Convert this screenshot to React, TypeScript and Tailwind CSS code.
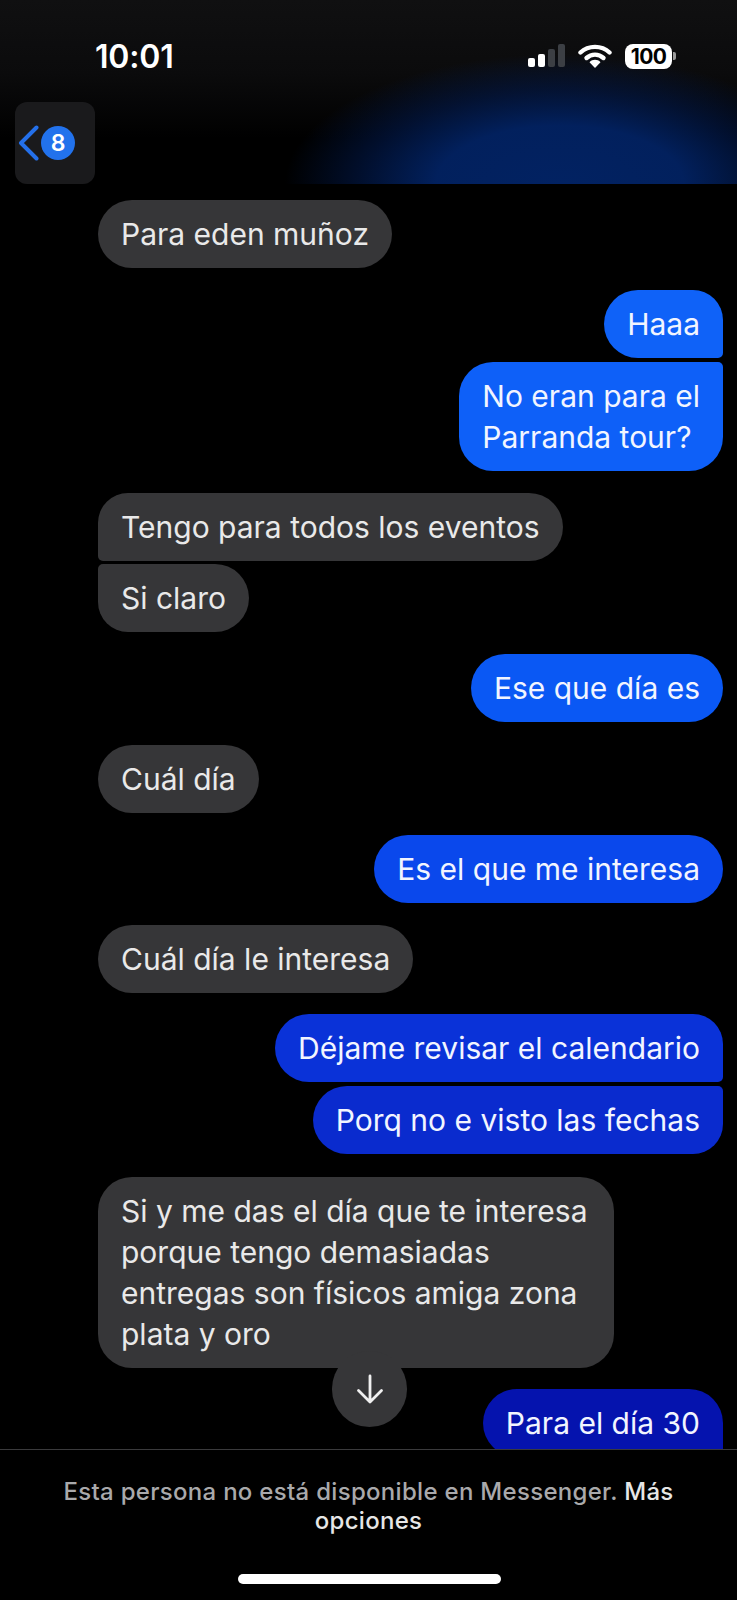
import React from "react";

type Msg = { t: string; me?: boolean; mt: string; cls: string };

const msgs: Msg[] = [
  { t: "Para eden muñoz", mt: "mt-[16px]", cls: "pr-[23px] rounded-[34px] bg-[#363638]" },
  { t: "Haaa", me: true, mt: "mt-[22px]", cls: "pr-[23px] rounded-l-[34px] rounded-tr-[30px] rounded-br-[5px] bg-[#0f62f8]" },
  { t: "No eran para el\nParranda tour?", me: true, mt: "mt-[4px]", cls: "pr-[23px] rounded-l-[34px] rounded-tr-[5px] rounded-br-[34px] bg-[#0e60f8]" },
  { t: "Tengo para todos los eventos", mt: "mt-[22px]", cls: "pr-[23px] rounded-r-[34px] rounded-tl-[30px] rounded-bl-[5px] bg-[#363638]" },
  { t: "Si claro", mt: "mt-[3px]", cls: "pr-[23px] rounded-r-[34px] rounded-tl-[5px] rounded-bl-[30px] bg-[#363638]" },
  { t: "Ese que día es", me: true, mt: "mt-[22px]", cls: "pr-[23px] rounded-[34px] bg-[#0a58f4]" },
  { t: "Cuál día", mt: "mt-[23px]", cls: "pr-[23px] rounded-[34px] bg-[#363638]" },
  { t: "Es el que me interesa", me: true, mt: "mt-[22px]", cls: "pr-[23px] rounded-[34px] bg-[#0a48ec]" },
  { t: "Cuál día le interesa", mt: "mt-[22px]", cls: "pr-[23px] rounded-[34px] bg-[#363638]" },
  { t: "Déjame revisar el calendario", me: true, mt: "mt-[21px]", cls: "pr-[23px] rounded-l-[34px] rounded-tr-[30px] rounded-br-[5px] bg-[#0a32d8]" },
  { t: "Porq no e visto las fechas", me: true, mt: "mt-[4px]", cls: "pr-[23px] rounded-l-[34px] rounded-tr-[5px] rounded-br-[30px] bg-[#0a2bce]" },
  { t: "Si y me das el día que te interesa\nporque tengo demasiadas\nentregas son físicos amiga zona\nplata y oro", mt: "mt-[23px]", cls: "pr-[26px] rounded-[34px] bg-[#363638]" },
  { t: "Para el día 30", me: true, mt: "mt-[21px]", cls: "pr-[23px] rounded-l-[34px] rounded-tr-[34px] rounded-br-[5px] bg-[#0513ae]" },
];

function Bubble({ m }: { m: Msg }) {
  return (
    <div className={`flex ${m.me ? "justify-end" : "justify-start"} ${m.mt}`}>
      <div
        className={`${m.cls} pl-[23px] py-[13.5px] whitespace-pre text-[30px] leading-[41px] ${
          m.me ? "text-[#f2f5ff]" : "text-[#e9e9e9]"
        }`}
      >
        {m.t}
      </div>
    </div>
  );
}

export default function App() {
  return (
    <div className="relative w-[737px] h-[1600px] overflow-hidden bg-black flex flex-col font-['Inter','Liberation_Sans',sans-serif]">
      {/* header */}
      <header className="relative h-[184px] shrink-0 bg-[linear-gradient(180deg,#101011_0%,#0b0b0c_40%,#000000_75%)] overflow-hidden">
        <div className="absolute inset-0 bg-[radial-gradient(ellipse_275px_130px_at_560px_100%,rgba(2,34,98,1)_0%,rgba(2,34,98,0.95)_45%,rgba(2,26,78,0.6)_72%,rgba(0,10,30,0)_100%)]" />
        <div className="relative flex items-center h-[112px] pl-[95px] pr-[61px]">
          <span className="mt-[2px] text-white text-[32px] font-semibold tracking-[-0.2px] leading-none">10:01</span>
          <div className="ml-auto flex items-center">
            <svg width="38" height="24" viewBox="0 0 38 24">
              <rect x="0" y="14" width="7" height="9" rx="2" fill="#fff" />
              <rect x="10" y="10" width="7" height="13" rx="2" fill="#fff" />
              <rect x="20" y="5" width="7" height="18" rx="2" fill="#3c3f44" />
              <rect x="30" y="0" width="7" height="23" rx="2" fill="#3c3f44" />
            </svg>
            <svg className="ml-[12px]" width="34" height="24" viewBox="0 0 34 24">
              <path d="M2.5 8.5C10.5 1 23.5 1 31.5 8.5" stroke="#fff" strokeWidth="4.4" fill="none" strokeLinecap="round" />
              <path d="M8.5 14C13.5 9.5 20.5 9.5 25.5 14" stroke="#fff" strokeWidth="4.4" fill="none" strokeLinecap="round" />
              <path d="M11.5 18.2C14.5 15 19.5 15 22.5 18.2L17 24Z" fill="#fff" />
            </svg>
            <div className="ml-[13px] flex items-center">
              <div className="w-[47px] h-[25px] rounded-[8px] bg-white flex items-center justify-center text-black text-[21px] font-bold tracking-[-0.6px] leading-none">
                100
              </div>
              <div className="ml-[1px] w-[3px] h-[8px] rounded-r-[2px] bg-[#9a9a9a]" />
            </div>
          </div>
        </div>
        <div className="absolute left-[15px] top-[102px] w-[80px] h-[82px] rounded-[12px] bg-[#1a1a1c] flex items-center">
          <svg className="ml-[3px]" width="21" height="36" viewBox="0 0 21 36">
            <path d="M18.5 2.5L3 18L18.5 33.5" stroke="#2470ea" strokeWidth="4" fill="none" strokeLinecap="round" strokeLinejoin="round" />
          </svg>
          <div className="ml-[2px] w-[34px] h-[34px] rounded-full bg-[#2272ec] flex items-center justify-center text-white text-[23px] font-semibold leading-none">
            8
          </div>
        </div>
      </header>

      {/* messages */}
      <main className="h-[1265px] shrink-0 overflow-hidden pl-[98px] pr-[14px]">
        {msgs.map((m, i) => (
          <Bubble key={i} m={m} />
        ))}
      </main>

      {/* footer */}
      <footer className="relative flex-1 border-t border-[#3a3a3c] bg-black flex flex-col items-center">
        <p className="mt-[27px] w-[680px] text-center text-[24px] leading-[29px] font-medium tracking-[0.3px] text-[#a9a9ab]">
          <span className="block">
            Esta persona no está disponible en Messenger. <span className="text-[#e6e6e6]">Más</span>
          </span>
          <span className="block text-[#e6e6e6]">opciones</span>
        </p>
        <div className="absolute left-[238px] top-[124px] w-[263px] h-[10px] rounded-full bg-white" />
      </footer>

      {/* scroll-down */}
      <div className="absolute left-[332px] top-[1351px] w-[75px] h-[76px] rounded-full bg-[#363638] flex items-center justify-center">
        <svg width="28" height="30" viewBox="0 0 28 30">
          <path d="M14 2V28M2.5 16.5L14 28L25.5 16.5" stroke="#f0f0f0" strokeWidth="2.8" fill="none" strokeLinecap="round" strokeLinejoin="round" />
        </svg>
      </div>
    </div>
  );
}
